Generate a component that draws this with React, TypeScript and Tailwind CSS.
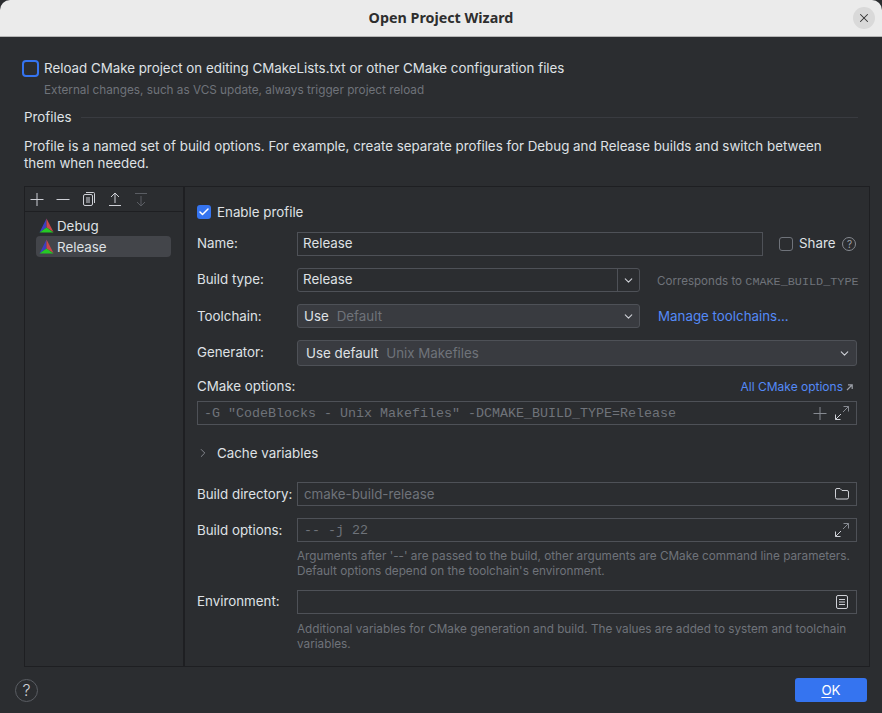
import React from "react";
import { ChevronDown, ChevronRight, X, Check } from "lucide-react";

const Logo = () => (
  <svg width="15" height="15" viewBox="0 0 15 15" className="shrink-0">
    <polygon points="7.5,0.5 7.5,9.5 0.5,14.5" fill="#3d3fc0" />
    <polygon points="7.5,0.5 14.5,14 7.5,9.5" fill="#c9474a" />
    <polygon points="0.5,14.5 7.5,9.5 14.5,14.5" fill="#26c926" />
  </svg>
);

const Expand = () => (
  <svg width="16" height="16" viewBox="0 0 16 16" fill="none" stroke="#ced0d6" strokeWidth="1" className="shrink-0">
    <path d="M9.5 1.5h5v5M14.5 1.5L9 7" stroke="#868a91" />
    <path d="M1.5 9.5v5h5M1.5 14.5L7 9" />
  </svg>
);

const PlusIcon = ({ color = "#ced0d6" }: { color?: string }) => (
  <svg width="16" height="16" viewBox="0 0 16 16" fill="none" stroke={color} strokeWidth="1" className="shrink-0">
    <path d="M1.5 8.5h13M8 2v13" />
  </svg>
);

const Field = ({ children, className = "" }: { children?: React.ReactNode; className?: string }) => (
  <div className={`flex h-6 items-center border border-[#4e5157] px-[6px] ${className}`}>{children}</div>
);

const Row = ({ label, children, className = "", labelClass = "" }: { label: string; children: React.ReactNode; className?: string; labelClass?: string }) => (
  <div className={`flex items-center ${className}`}>
    <div className={`w-[100px] shrink-0 text-[#dfe1e5] ${labelClass}`}>{label}</div>
    {children}
  </div>
);

const Hint = ({ children }: { children: React.ReactNode }) => (
  <div className="ml-[100px] text-[11.75px] leading-[15px] text-[#6f737a]">{children}</div>
);

export default function App() {
  return (
    <div className="flex h-[713px] w-[882px] flex-col overflow-hidden bg-[#2b2d30] text-[13.33px] leading-4 text-[#dfe1e5] [font-family:Inter,'Liberation_Sans',sans-serif]">
      <div className="relative flex h-[37px] shrink-0 items-center justify-center rounded-t-[10px] border-b border-[#b5b5b5] bg-[#ebebeb] text-[14.3px] font-bold text-[#2e2e2e] [font-family:'Noto_Sans',sans-serif]">
        Open Project Wizard
        <div className="absolute right-[7px] top-[7px] flex h-[22px] w-[22px] items-center justify-center rounded-full bg-[#d9d9d9]">
          <X size={14} strokeWidth={1.8} color="#333" />
        </div>
      </div>

      <div className="flex min-h-0 flex-1 flex-col px-[24px]">
        <div className="-ml-[2px] mt-[22px] flex h-[18px] items-center">
          <div className="mr-[5px] h-[17px] w-[17px] rounded-[4px] border-2 border-[#3574f0]" />
          <span>Reload CMake project on editing CMakeLists.txt or other CMake configuration files</span>
        </div>
        <div className="ml-[20px] mt-[6px] text-[11.75px] leading-[15px] text-[#6f737a]">External changes, such as VCS update, always trigger project reload</div>

        <div className="mt-[11px] flex items-center">
          <span>Profiles</span>
          <div className="ml-[9px] h-px flex-1 bg-[#393b40]" />
        </div>
        <div className="mt-[13px] leading-[17px]">
          Profile is a named set of build options. For example, create separate profiles for Debug and Release builds and switch between
          <br />
          them when needed.
        </div>

        <div className="mt-[14px] flex h-[481px] w-[846px] border border-[#1e1f22]">
          <div className="flex w-[160px] shrink-0 flex-col border-r-2 border-[#1e1f22]">
            <div className="flex h-[25px] items-center gap-[10px] border-b border-[#1e1f22] pl-[4px]">
              <PlusIcon />
              <svg width="16" height="16" viewBox="0 0 16 16" fill="none" stroke="#ced0d6" strokeWidth="1" className="shrink-0">
                <path d="M1.5 8.5h13" />
              </svg>
              <svg width="16" height="16" viewBox="0 0 16 16" fill="none" stroke="#ced0d6" strokeWidth="1" className="shrink-0">
                <rect x="2.5" y="3.5" width="9" height="11" rx="1.5" />
                <path d="M5 1.5h7.5a1 1 0 0 1 1 1V12M5 7h4M5 9h4M5 11h4" />
              </svg>
              <svg width="16" height="16" viewBox="0 0 16 16" fill="none" stroke="#ced0d6" strokeWidth="1" className="shrink-0">
                <path d="M2 14.5h12M8 12V2M4 6l4-4 4 4" />
              </svg>
              <svg width="16" height="16" viewBox="0 0 16 16" fill="none" stroke="#5a5d63" strokeWidth="1" className="shrink-0">
                <path d="M2 2.5h12M8 5v10M4 11l4 4 4-4" />
              </svg>
            </div>
            <div className="flex flex-col pl-[11px] pr-[12px] pt-[3px]">
              <div className="flex h-[21px] items-center gap-[3px] pl-[3px]">
                <Logo />
                Debug
              </div>
              <div className="flex h-[21px] items-center gap-[3px] rounded-[4px] bg-[#43454a] pl-[3px]">
                <Logo />
                Release
              </div>
            </div>
          </div>

          <div className="flex min-w-0 flex-1 flex-col pl-[12px] pr-[12px]">
            <div className="mt-[16px] flex h-[18px] items-center gap-[6px]">
              <div className="flex h-[14px] w-[14px] items-center justify-center rounded-[3px] bg-[#3574f0]">
                <Check size={12} strokeWidth={3} color="#fff" />
              </div>
              Enable profile
            </div>

            <Row label="Name:" className="mt-[11px]" labelClass="pb-[2px]">
              <Field className="w-[466px] pb-[2px] pl-[5px]">Release</Field>
              <div className="ml-[16px] h-[14px] w-[14px] rounded-[3px] border border-[#6f737a]" />
              <span className="ml-[6px] pb-[2px]">Share</span>
              <div className="ml-[7px] flex h-[14px] w-[14px] items-center justify-center rounded-full border border-[#868a91] text-[10px] text-[#9da0a8]">?</div>
            </Row>

            <Row label="Build type:" className="mt-[12px]" labelClass="pb-[2px]">
              <div className="flex h-6 w-[343px] shrink-0 items-center rounded-[3px] border border-[#4e5157]">
                <span className="flex-1 px-[5px] pb-[2px]">Release</span>
                <div className="flex h-full w-[22px] items-center justify-center border-l border-[#4e5157]">
                  <ChevronDown size={13} color="#ced0d6" />
                </div>
              </div>
              <div className="ml-[17px] whitespace-nowrap pt-[2px] text-[11.6px] text-[#6f737a]">
                Corresponds to <span className="text-[11.8px] [font-family:'Liberation_Mono',monospace]">CMAKE_BUILD_TYPE</span>
              </div>
            </Row>

            <Row label="Toolchain:" className="mt-[12px]">
              <div className="flex h-6 w-[343px] shrink-0 items-center rounded-[3px] border border-[#4e5157] bg-[#393b40] pl-[6px] pr-[4px]">
                <span>Use</span>
                <span className="ml-[8px] flex-1 text-[#6f737a]">Default</span>
                <ChevronDown size={13} color="#ced0d6" />
              </div>
              <span className="ml-[18px] text-[#548af7]">Manage toolchains...</span>
            </Row>

            <Row label="Generator:" className="mt-[12px]" labelClass="pb-[2px]">
              <div className="flex h-[26px] flex-1 items-center rounded-[3px] border border-[#4e5157] bg-[#393b40] pl-[8px] pr-[5px]">
                <span>Use default</span>
                <span className="ml-[8px] flex-1 text-[#6f737a]">Unix Makefiles</span>
                <ChevronDown size={13} color="#ced0d6" />
              </div>
            </Row>

            <div className="mt-[12px] flex h-[16px] items-center justify-between">
              <span>CMake options:</span>
              <span className="flex items-center pr-[3px] pt-[2px] text-[12px] text-[#548af7]">
                All CMake options
                <svg width="9" height="9" viewBox="0 0 9 9" className="ml-[2px]" fill="none" stroke="#9da0a8" strokeWidth="1.2">
                  <path d="M2 7l5-5M3 1.8h4.2V6" />
                </svg>
              </span>
            </div>
            <Field className="mt-[7px] text-[#6f737a]">
              <span className="flex-1 whitespace-nowrap pt-[2px] [font-family:'Liberation_Mono',monospace]">-G "CodeBlocks - Unix Makefiles" -DCMAKE_BUILD_TYPE=Release</span>
              <PlusIcon color="#868a91" />
              <span className="ml-[6px]"><Expand /></span>
            </Field>

            <div className="mt-[19px] flex h-[17px] items-center gap-[6px]">
              <ChevronRight size={14} strokeWidth={1.3} color="#9da0a8" className="-ml-[1px]" />
              <span className="ml-[1px]">Cache variables</span>
            </div>

            <Row label="Build directory:" className="mt-[21px]">
              <Field className="flex-1 text-[#6f737a]">
                <span className="flex-1">cmake-build-release</span>
                <svg width="16" height="16" viewBox="0 0 16 16" fill="none" stroke="#ced0d6" strokeWidth="1">
                  <path d="M1.5 4a1.5 1.5 0 0 1 1.5-1.5h3l2 2h5a1.5 1.5 0 0 1 1.5 1.5v5.5a1.5 1.5 0 0 1-1.5 1.5H3a1.5 1.5 0 0 1-1.5-1.5z" />
                </svg>
              </Field>
            </Row>

            <Row label="Build options:" className="mt-[12px]">
              <Field className="flex-1 text-[#6f737a]">
                <span className="flex-1 pt-[2px] [font-family:'Liberation_Mono',monospace]">-- -j 22</span>
                <Expand />
              </Field>
            </Row>
            <div className="mt-[7px]">
              <Hint>
                Arguments after '--' are passed to the build, other arguments are CMake command line parameters.
                <br />
                Default options depend on the toolchain's environment.
              </Hint>
            </div>

            <Row label="Environment:" className="mt-[11px]" labelClass="pb-[2px]">
              <Field className="flex-1 justify-end">
                <svg width="16" height="16" viewBox="0 0 16 16" fill="none" stroke="#ced0d6" strokeWidth="1">
                  <rect x="2.5" y="1.5" width="11" height="13" rx="1.5" />
                  <path d="M5 5.5h6M5 8h6M5 10.5h6" />
                </svg>
              </Field>
            </Row>
            <div className="mt-[8px]">
              <Hint>
                Additional variables for CMake generation and build. The values are added to system and toolchain
                <br />
                variables.
              </Hint>
            </div>
          </div>
        </div>

        <div className="mt-[11px] flex items-center justify-between">
          <div className="-ml-[9px] flex h-[23px] w-[23px] items-center justify-center rounded-full border border-[#5a5d63] text-[16px] font-light text-[#ced0d6]">?</div>
          <div className="-mr-[9px] flex h-[24px] w-[72px] items-center justify-center rounded-[3px] bg-[#3574f0] text-[#fff]">
            <span><span className="underline underline-offset-2">O</span>K</span>
          </div>
        </div>
      </div>
    </div>
  );
}
